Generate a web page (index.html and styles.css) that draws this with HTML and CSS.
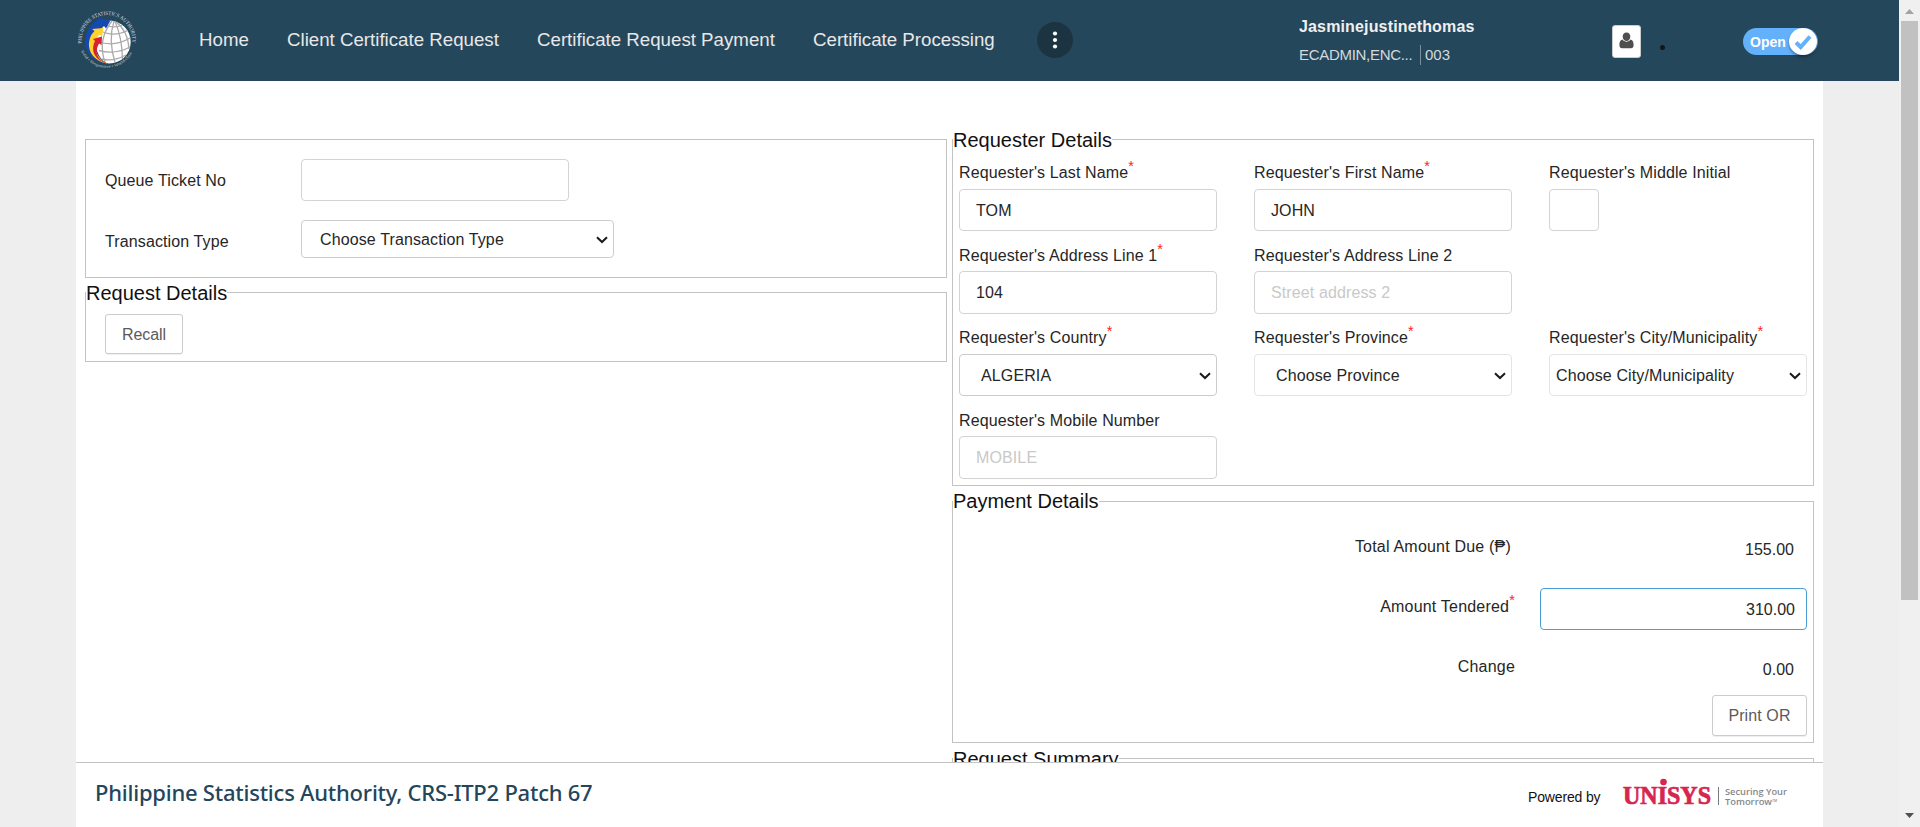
FILE: index.html
```html
<!DOCTYPE html>
<html lang="en">
<head>
<meta charset="utf-8">
<title>Certificate Request Payment</title>
<link rel="stylesheet" href="styles.css">
</head>
<body>
<div class="app">
  <header class="header">
    <svg class="logo" width="60" height="60" viewBox="0 0 60 60">
      <defs>
        <path id="arcTop" d="M4.900 33.500 A25.300 25.300 0 1 1 55.100 33.500"/>
        <path id="arcBottom" d="M4 41 A28.500 28.500 0 0 0 56 41"/>
      </defs>
      <text class="seal-text"><textPath href="#arcTop" textLength="85" lengthAdjust="spacingAndGlyphs">PHILIPPINE STATISTICS AUTHORITY</textPath></text>
      <text class="seal-sub"><textPath href="#arcBottom" textLength="63" lengthAdjust="spacingAndGlyphs">Solid • Responsive • World-class</textPath></text>
      <circle cx="32.200" cy="32" r="21.500" fill="#fff"/>
      <g fill="none" stroke="#aaa" stroke-width="1.300">
        <path d="M26 14 Q35 19 45 15.500"/><path d="M26 22 Q38 27 50.500 20.500"/><path d="M22 32 Q38 37 53 28"/><path d="M22 40.500 Q38 45 53 37"/><path d="M25 49 Q36 52 49 45"/>
        <path d="M35 11 Q20 30 28 52"/><path d="M37 11 Q31 30 38 52.500"/><path d="M38 11.500 Q45 27 45.500 49"/><path d="M39 12 Q51 21 52 39"/>
      </g>
      <path d="M30 53.500 C11 52 3 33 11.500 19.500 C14.500 13.500 19 10.500 22 9.500 L20 7.500 L33.500 10.500 L29 18.500 L27 16 C17 24 15 44 30 53.500Z" fill="#1549b0"/>
      <path d="M30 53.500 C13 50 8.500 36 14.500 24.500 L17.500 21 L15 19 L26.500 18 L25 26.500 L22.500 24.500 C14.500 34 18 47 30 53.500Z" fill="#ffd22c"/>
      <path d="M31 53.700 C18 50.500 13 41 18 31 L16 29 L25 26.500 L24.500 35 L22 33.500 C17 42 20 50 31 53.700Z" fill="#d8232f"/>
    </svg>
    <nav class="nav">
      <a class="nav-home">Home</a>
      <a class="nav-client">Client Certificate Request</a>
      <a class="nav-payment">Certificate Request Payment</a>
      <a class="nav-processing">Certificate Processing</a>
    </nav>
    <button class="more" aria-label="More"><svg width="36" height="36" viewBox="0 0 36 36"><g fill="#fff"><circle cx="18" cy="11.500" r="2.100"/><circle cx="18" cy="18" r="2.100"/><circle cx="18" cy="24.500" r="2.100"/></g></svg></button>
    <div class="user">
      <div class="user-name">Jasminejustinethomas</div>
      <div class="user-meta"><span class="user-role">ECADMIN,ENC...</span><span class="user-code">003</span></div>
    </div>
    <button class="profile" aria-label="Profile"><svg width="15" height="17" viewBox="0 0 15 17"><path d="M7.500 .5C10 .5 11.300 2.300 11.300 4.700S9.500 9 7.500 9 3.700 7.100 3.700 4.700 5 .5 7.500 .5Z" fill="#4f4f4f"/><path d="M3.400 7.600C1 8 .4 10.400 .4 13.200c0 2 1 3 2.600 3h9c1.600 0 2.600-1 2.600-3 0-2.800-.6-5.200-3-5.600C9.500 10.300 5.500 10.300 3.400 7.600Z" fill="#4f4f4f"/></svg></button>
    <span class="bullet"></span>
    <div class="toggle"><span class="toggle-label">Open</span><span class="knob"><svg width="18" height="16" viewBox="0 0 18 16"><path d="M2 8.500 L6.700 13 L16 2.500" fill="none" stroke="#64b1fb" stroke-width="4"/></svg></span></div>
  </header>

  <main class="page">
    <div class="column">
      <section class="panel ticket">
        <label class="ticket-label">Queue Ticket No</label><div class="field queue"></div>
        <label class="ticket-label type-label">Transaction Type</label>
        <div class="field select type">Choose Transaction Type<svg class="chevron" width="12" height="8" viewBox="0 0 12 8"><path d="M1 1.200 L6 6 L11 1.200"/></svg></div>
      </section>
      <section class="panel request">
        <h2 class="legend">Request Details</h2>
        <button class="btn recall">Recall</button>
      </section>
    </div>
    <div class="column">
      <section class="panel requester">
        <h2 class="legend">Requester Details</h2>
        <div class="cell"><label>Requester's Last Name<i class="req">*</i></label><div class="field">TOM</div></div>
        <div class="cell"><label>Requester's First Name<i class="req">*</i></label><div class="field">JOHN</div></div>
        <div class="cell"><label>Requester's Middle Initial</label><div class="field initial"></div></div>
        <div class="cell low"><label>Requester's Address Line 1<i class="req">*</i></label><div class="field tall">104</div></div>
        <div class="cell low"><label>Requester's Address Line 2</label><div class="field tall hint">Street address 2</div></div>
        <div class="cell"></div>
        <div class="cell"><label>Requester's Country<i class="req">*</i></label><div class="field select">ALGERIA<svg class="chevron" width="12" height="8" viewBox="0 0 12 8"><path d="M1 1.200 L6 6 L11 1.200"/></svg></div></div>
        <div class="cell"><label>Requester's Province<i class="req">*</i></label><div class="field select light">Choose Province<svg class="chevron" width="12" height="8" viewBox="0 0 12 8"><path d="M1 1.200 L6 6 L11 1.200"/></svg></div></div>
        <div class="cell"><label>Requester's City/Municipality<i class="req">*</i></label><div class="field select light city">Choose City/Municipality<svg class="chevron" width="12" height="8" viewBox="0 0 12 8"><path d="M1 1.200 L6 6 L11 1.200"/></svg></div></div>
        <div class="cell low"><label>Requester's Mobile Number</label><div class="field tall hint">MOBILE</div></div>
      </section>
      <section class="panel payment">
        <h2 class="legend">Payment Details</h2>
        <div class="pay-row"><label class="due">Total Amount Due (₱)</label><div class="amount">155.00</div></div>
        <div class="pay-row"><label>Amount Tendered<i class="req">*</i></label><div class="amount tendered">310.00</div></div>
        <div class="pay-row"><label>Change</label><div class="amount">0.00</div></div>
        <button class="btn print">Print OR</button>
      </section>
      <section class="panel summary"><h2 class="legend">Request Summary</h2></section>
    </div>
  </main>

  <footer class="footer">
    <div class="product">Philippine Statistics Authority, CRS-ITP2 Patch 67</div>
    <div class="powered">Powered by</div>
    <svg class="vendor" width="168" height="32" viewBox="0 0 168 32">
      <g class="vendor-name"><text x="0" y="28" textLength="88" lengthAdjust="spacingAndGlyphs">UNISYS</text></g>
      <circle cx="40.500" cy="6" r="3.300" fill="#d6264f"/>
      <path d="M95.500 11V29" stroke="#77797d"/>
      <g class="vendor-tag"><text x="102" y="18.500" textLength="62" lengthAdjust="spacingAndGlyphs">Securing Your</text><text x="102" y="28.500" textLength="47" lengthAdjust="spacingAndGlyphs">Tomorrow</text><text class="tm" x="149" y="26" textLength="5" lengthAdjust="spacingAndGlyphs">TM</text></g>
    </svg>
  </footer>
</div>
<div class="scrollbar">
  <svg width="21" height="21" viewBox="0 0 21 21"><path d="M6 14 L10.500 9 L15 14Z" fill="#a3a3a3"/></svg>
  <div class="thumb"></div>
  <svg width="21" height="21" viewBox="0 0 21 21"><path d="M6 7 L10.500 12 L15 7Z" fill="#505050"/></svg>
</div>
</body>
</html>
```
FILE: styles.css
```css
* { box-sizing: border-box; }
body { margin: 0; display: flex; height: 827px; overflow: hidden; background: #eee; font: 16px/20px "Liberation Sans", Arial, sans-serif; color: #262626; }
h2 { margin: 0; font-weight: 400; }
button { font: inherit; padding: 0; }
svg { display: block; flex: none; }
.app { width: 1899px; display: flex; flex-direction: column; }

.header { height: 81px; flex: none; background: #25475b; display: flex; align-items: flex-start; color: #e8e8e8; }
.logo { margin: 10px 0 0 77px; overflow: visible; }
.seal-text { font: 5.4px "Liberation Serif", serif; fill: #d5dde2; }
.seal-sub { font: 4px "Liberation Serif", serif; fill: #c9d3da; }
.nav { display: flex; margin: 28px 0 0 62px; font-size: 18.7px; line-height: 24px; white-space: nowrap; }
.nav-home { width: 88px; }
.nav-client { width: 250px; }
.nav-payment { width: 276px; }
.nav-processing { width: 224px; }
.more { margin: 22px 0 0; width: 36px; height: 36px; border: 0; border-radius: 50%; background: #1c3442; }
.user { margin: 17px 0 0 226px; width: 313px; line-height: 20px; }
.user-name { font-weight: 700; font-size: 16px; letter-spacing: .15px; color: #f0f0f0; }
.user-meta { margin-top: 8px; display: flex; font-size: 15px; color: #d5d9dc; }
.user-role { width: 122px; border-right: 1px solid #7c8f9b; letter-spacing: -.3px; }
.user-code { padding-left: 4px; }
.profile { margin: 25px 0 0; width: 29px; height: 33px; border: 1px solid #ccc; border-radius: 3px; background: #fff; display: flex; align-items: center; justify-content: center; padding-bottom: 3px; }
.bullet { margin: 45px 0 0 19px; width: 5px; height: 5px; border-radius: 50%; background: #151515; }
.toggle { margin: 28px 0 0 78px; width: 75px; height: 27px; border-radius: 14px; background: #64b1fb; display: flex; align-items: center; padding-left: 7px; font-size: 14px; font-weight: 700; color: #fff; }
.toggle-label { width: 39px; }
.knob { width: 28px; height: 27px; border-radius: 50%; background: #fff; display: flex; align-items: center; justify-content: center; box-shadow: 0 2px 3px rgba(0,0,0,.35); }

.page { margin-left: 76px; width: 1747px; height: 681px; overflow: hidden; background: #fff; display: flex; gap: 5px; padding: 58px 9px 0; letter-spacing: .12px; }
.column { width: 862px; }
.panel { position: relative; border: 1px solid #c3c3c3; }
.legend { position: absolute; left: 0; top: -12px; background: #fff; font-size: 20px; line-height: 24px; letter-spacing: 0; color: #111; white-space: nowrap; }
.field { height: 42px; border: 1px solid #d3d3d3; border-radius: 4px; padding: 1px 0 0 16px; display: flex; align-items: center; background: #fff; white-space: nowrap; }
.tall { height: 43px; }
.hint { color: #c9c9c9; }
.select { padding: 1px 5px 0 21px; justify-content: space-between; border-color: #ccc; }
.light { border-color: #e4e4e4; }
.city { padding-left: 6px; }
.chevron path { fill: none; stroke: #1a1a1a; stroke-width: 2; }
.btn { display: block; height: 40px; border: 1px solid #ccc; border-radius: 3px; background: #fff; color: #5b5b5b; letter-spacing: -.1px; box-shadow: 0 1px 1px rgba(0,0,0,.07); }
.req { font-style: normal; color: #f22; font-size: 14.5px; line-height: 0; position: relative; top: -7px; }

.ticket { height: 139px; display: grid; grid-template-columns: 196px auto; grid-template-rows: 61px 38px; padding: 19px 0 0 19px; justify-content: start; }
.ticket-label { padding-top: 12px; }
.queue { width: 268px; }
.type { width: 313px; height: 38px; padding-left: 18px; }
.request { margin-top: 14px; height: 70px; padding: 21px 0 0 19px; }
.recall { width: 78px; padding-top: 1px; }

.requester { height: 347px; display: grid; grid-template-columns: repeat(3, 258px); column-gap: 37px; grid-template-rows: 82px 83px 82px 71px; padding: 21px 0 0 6px; }
.cell label { display: block; height: 28px; padding-top: 2px; white-space: nowrap; }
.cell.low label { padding-top: 3px; }
.initial { width: 50px; }

.payment { margin-top: 15px; height: 242px; padding: 26px 6px 0; }
.payment .legend { top: -13px; }
.pay-row { height: 60px; display: flex; justify-content: flex-end; }
.pay-row label { padding-top: 9px; margin-right: 25px; letter-spacing: .2px; }
.pay-row .due { margin-right: 29px; }
.amount { width: 267px; height: 42px; padding: 12px 13px 0 0; text-align: right; letter-spacing: 0; }
.tendered { border: 1px solid #4a9ed3; border-radius: 4px; padding: 11px 11px 0 0; }
.print { margin: -13px 0 0 auto; width: 95px; height: 41px; letter-spacing: .1px; }
.summary { margin-top: 15px; height: 80px; }

.footer { margin-left: 76px; width: 1747px; height: 65px; border-top: 1px solid #c3c3c3; background: #fff; display: flex; align-items: flex-start; }
.product { margin: 14px 0 0 19px; width: 1433px; font: 500 22px/30px "Noto Sans", "Open Sans", sans-serif; letter-spacing: -.23px; color: #24465b; white-space: nowrap; }
.powered { margin-top: 24px; width: 95px; font-size: 14px; line-height: 20px; letter-spacing: -.15px; color: #111; }
.vendor { margin-top: 13px; overflow: visible; }
.vendor-name { font: 700 25px "Liberation Serif", serif; fill: #d6264f; stroke: #d6264f; stroke-width: .7; }
.vendor-tag { font: 600 9.5px "Open Sans", sans-serif; fill: #85878b; }
.tm { font-size: 4px; }

.scrollbar { width: 21px; background: #f0f0f0; display: flex; flex-direction: column; }
.thumb { margin: 0 2px 206px; height: 579px; background: #c1c1c1; }
```
